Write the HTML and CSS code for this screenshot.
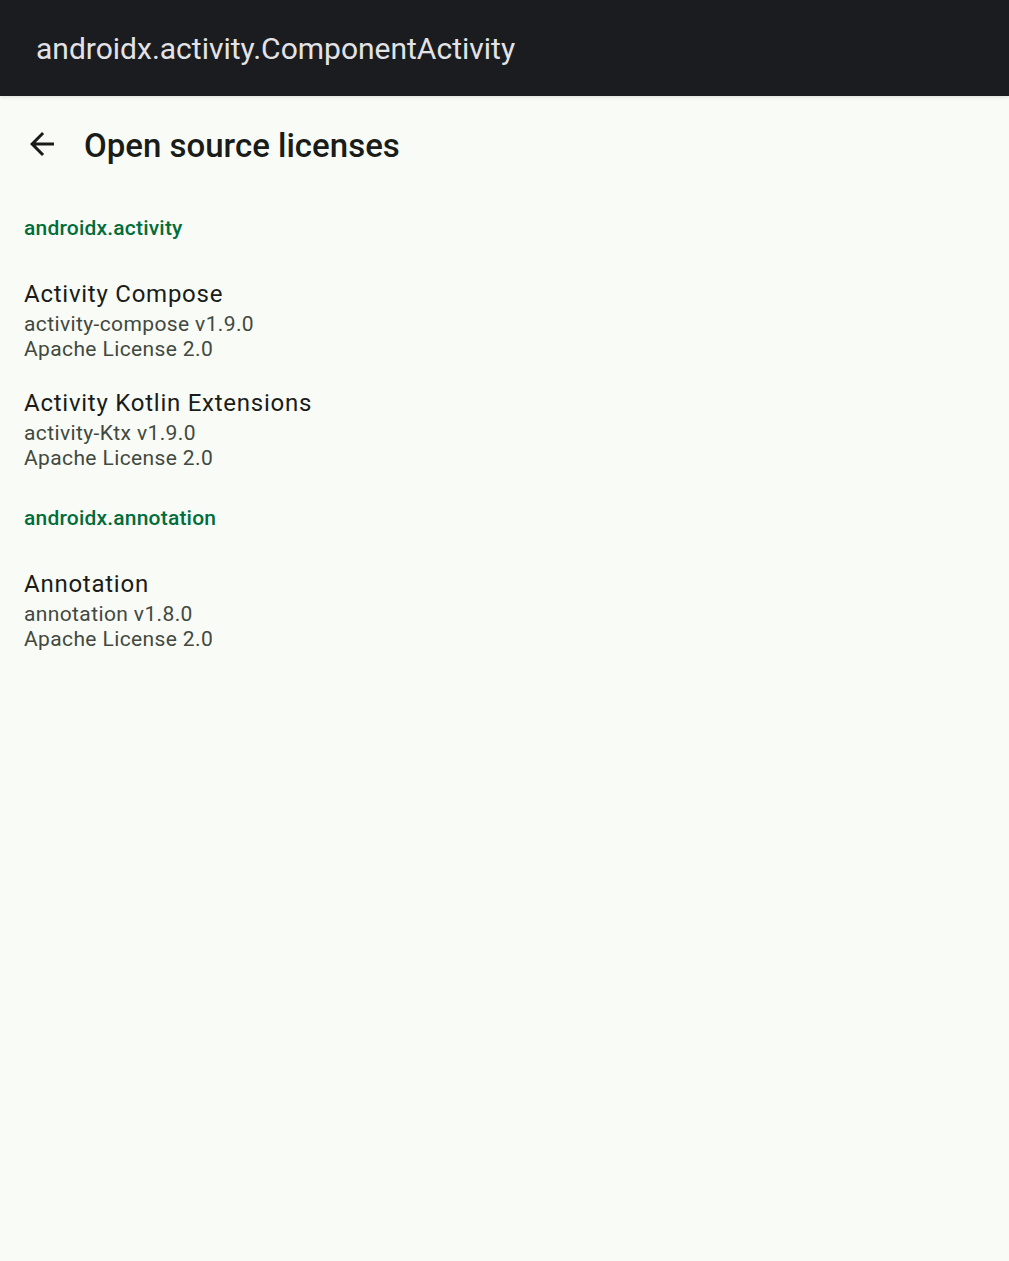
FILE: index.html
```html
<!DOCTYPE html>
<html>
<head>
<meta charset="utf-8">
<link rel="stylesheet" href="styles.css">
</head>
<body>
<div class="sysbar">androidx.activity.ComponentActivity</div>
<div class="toolbar">
  <svg class="back" viewBox="0 0 24 24" width="36" height="36"><path d="M20 11H7.83l5.59-5.59L12 4l-8 8 8 8 1.41-1.41L7.83 13H20v-2z" fill="#1a1c19"/></svg>
  <div class="title">Open source licenses</div>
</div>
<div class="list">
  <div class="group">androidx.activity</div>
  <div class="item">
    <div class="name">Activity Compose</div>
    <div class="sub">activity-compose v1.9.0</div>
    <div class="sub">Apache License 2.0</div>
  </div>
  <div class="item">
    <div class="name">Activity Kotlin Extensions</div>
    <div class="sub">activity-Ktx v1.9.0</div>
    <div class="sub">Apache License 2.0</div>
  </div>
  <div class="group">androidx.annotation</div>
  <div class="item">
    <div class="name">Annotation</div>
    <div class="sub">annotation v1.8.0</div>
    <div class="sub">Apache License 2.0</div>
  </div>
</div>
</body>
</html>
```
FILE: styles.css
```css
html, body {
  margin: 0;
  padding: 0;
}
body {
  background: #f9fbf6;
  font-family: Roboto, "Noto Sans", sans-serif;
  height: 1261px;
  overflow: hidden;
}
.sysbar {
  height: 96px;
  background: #1b1c20;
  color: #e3e3e6;
  font-size: 30px;
  padding-left: 36px;
  display: flex;
  align-items: center;
  box-shadow: 0 1px 4px rgba(0,0,0,0.12);
  position: relative;
}
.toolbar {
  height: 96px;
  display: flex;
  align-items: center;
  padding-left: 24px;
}
.back {
  display: block;
  margin-right: 24px;
}
.title {
  font-size: 33px;
  font-weight: 500;
  color: #1a1c19;
  margin-top: 2px;
}
.list {
  padding: 0 24px;
}
.group {
  color: #006d3b;
  font-size: 21px;
  font-weight: 500;
  line-height: 24px;
  letter-spacing: 0.2px;
  padding: 24px 0;
}
.item {
  padding: 12px 0;
}
.name {
  font-size: 24px;
  line-height: 36px;
  color: #1a1c19;
  letter-spacing: 0.75px;
}
.sub {
  font-size: 21px;
  line-height: 24.5px;
  color: #424940;
  letter-spacing: 0.38px;
}
```
